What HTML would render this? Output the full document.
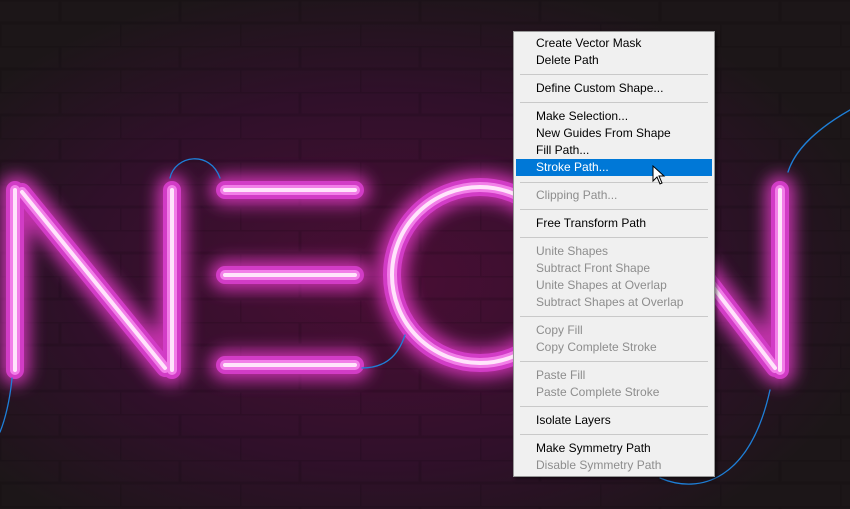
<!DOCTYPE html>
<html><head><style>
body{margin:0;width:850px;height:509px;overflow:hidden;background:#1a1416;font-family:"Liberation Sans",Tahoma,sans-serif}
#bg{position:absolute;left:0;top:0}
.menu{position:absolute;left:513px;top:31px;width:200px;height:444px;background:#f0f0f0;border:1px solid #979797;box-shadow:2px 2px 3px rgba(0,0,0,.5)}
.it{position:absolute;left:2px;width:196px;height:17px;font-size:12px;line-height:17px;padding-left:20px;box-sizing:border-box;color:#000}
.d{color:#8d8d8d}
.sel{background:#0078d7;color:#fff}
.sp{position:absolute;left:6px;width:188px;height:1px;background:#c9c9c9}
</style></head><body>
<svg id="bg" width="850" height="509">
<defs>
<radialGradient id="g" cx="0.45" cy="0.55" r="0.6"><stop offset="0" stop-color="#4a0e35"/><stop offset="0.6" stop-color="#30102a"/><stop offset="1" stop-color="#1c1618"/></radialGradient>
<filter id="glow" x="-30%" y="-30%" width="160%" height="160%"><feGaussianBlur stdDeviation="8"/></filter>
<pattern id="br" width="120" height="46" patternUnits="userSpaceOnUse"><path d="M0 0H120M0 23H120M60 0V23M0 23V46" stroke="#000" stroke-opacity=".12" stroke-width="3" fill="none"/></pattern>
</defs>
<rect width="850" height="509" fill="url(#g)"/>
<rect width="850" height="509" fill="url(#br)"/>
<g fill="none" stroke-linecap="round" stroke-linejoin="round">
<g stroke="#ff40e0" stroke-width="30" filter="url(#glow)" opacity=".7">
<path d="M15 190V370M22 192L165 368M172 190V370M225 190H355M225 275H355M225 365H355M780 190V370M700 270L775 368"/>
<circle cx="480" cy="275" r="88"/>
</g>
<g stroke="#d23cc6" stroke-width="18">
<path d="M15 190V370M22 192L165 368M172 190V370M225 190H355M225 275H355M225 365H355M780 190V370M700 270L775 368"/>
<circle cx="480" cy="275" r="88"/>
</g>
<g stroke="#f27ee8" stroke-width="10">
<path d="M15 190V370M22 192L165 368M172 190V370M225 190H355M225 275H355M225 365H355M780 190V370M700 270L775 368"/>
<circle cx="480" cy="275" r="88"/>
</g>
<g stroke="#ffe4fb" stroke-width="4">
<path d="M15 190V370M22 192L165 368M172 190V370M225 190H355M225 275H355M225 365H355M780 190V370M700 270L775 368"/>
<circle cx="480" cy="275" r="88"/>
</g>
<g stroke="#1e7fd8" stroke-width="1.3">
<path d="M170 178C175 155 210 150 220 178M362 368C390 368 400 350 405 335M12 378C10 400 5 420 0 432M788 172C795 150 815 130 850 110M660 478C700 495 750 480 770 390"/>
</g>
</g>
</svg>
<div class="menu">
<div class="it" style="top:3px">Create Vector Mask</div>
<div class="it" style="top:20px">Delete Path</div>
<div class="sp" style="top:42px"></div>
<div class="it" style="top:48px">Define Custom Shape...</div>
<div class="sp" style="top:70px"></div>
<div class="it" style="top:76px">Make Selection...</div>
<div class="it" style="top:93px">New Guides From Shape</div>
<div class="it" style="top:110px">Fill Path...</div>
<div class="it sel" style="top:127px">Stroke Path...</div>
<div class="sp" style="top:150px"></div>
<div class="it d" style="top:155px">Clipping Path...</div>
<div class="sp" style="top:177px"></div>
<div class="it" style="top:183px">Free Transform Path</div>
<div class="sp" style="top:205px"></div>
<div class="it d" style="top:211px">Unite Shapes</div>
<div class="it d" style="top:228px">Subtract Front Shape</div>
<div class="it d" style="top:245px">Unite Shapes at Overlap</div>
<div class="it d" style="top:262px">Subtract Shapes at Overlap</div>
<div class="sp" style="top:284px"></div>
<div class="it d" style="top:290px">Copy Fill</div>
<div class="it d" style="top:307px">Copy Complete Stroke</div>
<div class="sp" style="top:329px"></div>
<div class="it d" style="top:335px">Paste Fill</div>
<div class="it d" style="top:352px">Paste Complete Stroke</div>
<div class="sp" style="top:374px"></div>
<div class="it" style="top:380px">Isolate Layers</div>
<div class="sp" style="top:402px"></div>
<div class="it" style="top:408px">Make Symmetry Path</div>
<div class="it d" style="top:425px">Disable Symmetry Path</div>
</div>
<svg style="position:absolute;left:652px;top:165px" width="14" height="20"><path d="M1 1V16L5 12L8 19L10 18L7 11H12Z" fill="#fff" stroke="#000" stroke-width="1"/></svg>
</body></html>
